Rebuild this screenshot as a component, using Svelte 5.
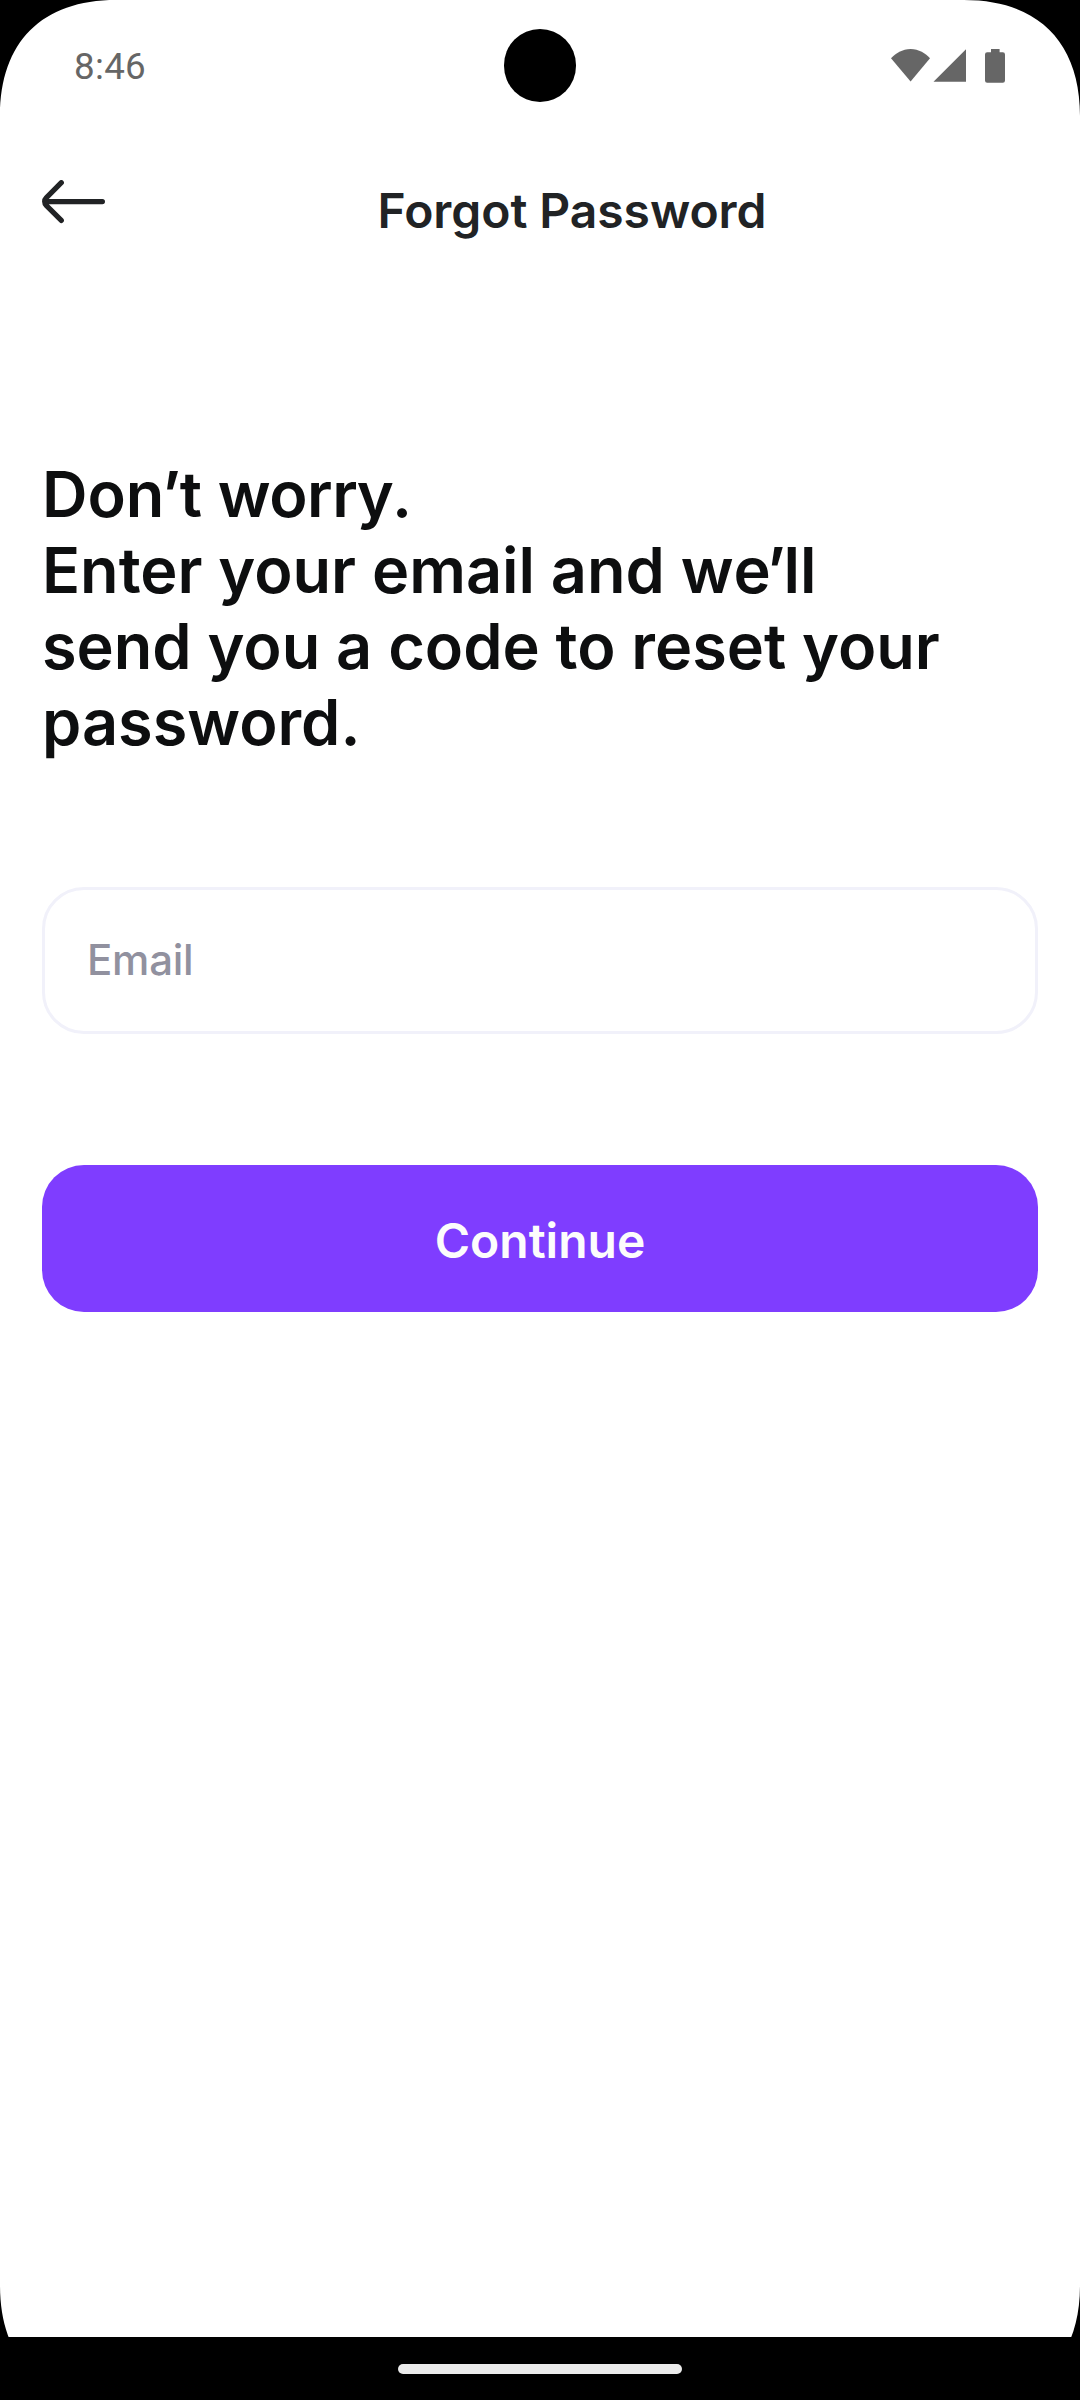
<script lang="ts">
  let email = $state('');
</script>

<div class="device">
  <main class="screen">
    <header class="status">
      <span class="time">8:46</span>
      <svg class="indicators" width="116" height="36" viewBox="890 48 116 36" fill="#666">
        <path d="M910.6 81.6 891 58.2C895.6 53.6 902.4 49 910.6 49S925.600 53.600 930 58.200Z" />
        <path d="M933.500 81.700H966V49.200Z" />
        <path d="M991 49h8.600v3.300h3.200a2.200 2.200 0 0 1 2.200 2.200v26a2.200 2.200 0 0 1-2.200 2.200h-15.600a2.200 2.200 0 0 1-2.200-2.200v-26a2.200 2.200 0 0 1 2.200-2.200h3.800Z" />
      </svg>
    </header>

    <nav class="topbar">
      <button class="back" aria-label="Back">
        <svg width="64" height="44" viewBox="42 180 64 44" fill="none" stroke="#212325" stroke-width="5.2" stroke-linecap="round" stroke-linejoin="round">
          <path d="M61.300 182.700 46.200 197.800a5.300 5.300 0 0 0 0 7.500L61.300 220.400M46 201.600H102.400" />
        </svg>
      </button>
      <h1>Forgot Password</h1>
    </nav>

    <form class="form" onsubmit={(e) => e.preventDefault()}>
      <p class="message">Do<span class="snug">n’</span>t <span class="close">worr</span><span class="tail">y</span>.<br />Enter your email and w<span class="tight">e</span><span class="tail">’</span>ll<br />send you a code to reset your<br />password.</p>
      <input type="email" placeholder="Email" bind:value={email} />
      <button class="continue" type="submit">Continue</button>
    </form>
  </main>

  <footer class="gesture"><span class="pill"></span></footer>

  <span class="camera"></span>
  <svg class="corners" width="1080" height="2400" viewBox="0 0 1080 2400">
    <path d="M0 0H116C42 0 0 42 0 116Z" />
    <path d="M1080 0H964C1038 0 1080 42 1080 116Z" />
    <path d="M0 2400H116C41 2400 0 2359 0 2285Z" />
    <path d="M1080 2400H964C1039 2400 1080 2359 1080 2285Z" />
  </svg>
</div>

<style>
  :global(body) {
    margin: 0;
    background: #000;
  }

  .device {
    position: relative;
    display: flex;
    flex-direction: column;
    width: 1080px;
    height: 2400px;
    overflow: hidden;
    background: #000;
    font-family: Inter, 'Liberation Sans', sans-serif;
  }

  .screen {
    display: flex;
    flex-direction: column;
    flex: 1;
    background: #fff;
  }

  .status {
    box-sizing: border-box;
    display: flex;
    justify-content: space-between;
    align-items: center;
    height: 132px;
    padding: 0 74px;
  }

  .time {
    padding-top: 2px;
    color: #666;
    font: 400 36.75px/44px Roboto, sans-serif;
    letter-spacing: 0.3px;
  }

  .topbar {
    display: grid;
    grid-template-columns: 64px 1fr;
    height: 168px;
    padding: 0 42px;
  }

  .back {
    width: 64px;
    height: 44px;
    margin-top: 48px;
    padding: 0;
    border: 0;
    background: none;
  }

  .back svg {
    display: block;
  }

  h1 {
    margin: 51px 0 0;
    text-align: center;
    color: #212325;
    font-size: 48px;
    font-weight: 600;
    line-height: 56px;
    letter-spacing: -0.06px;
  }

  .form {
    display: flex;
    flex-direction: column;
    margin-top: 156px;
    padding: 0 42px;
  }

  .message {
    margin: 0 0 127px;
    color: #0d0e0f;
    font-size: 63px;
    font-weight: 600;
    line-height: 76px;
    letter-spacing: -0.02px;
    white-space: nowrap;
  }

  .snug {
    letter-spacing: -0.900px;
  }

  .close {
    letter-spacing: -0.500px;
  }

  .tail {
    letter-spacing: -1.700px;
  }

  .tight {
    letter-spacing: -4px;
  }

  input {
    box-sizing: border-box;
    width: 100%;
    height: 147px;
    padding: 0 42px 2px;
    border: 3px solid #f1f1fa;
    border-radius: 42px;
    outline: 0;
    background: transparent;
    color: #0d0e0f;
    font: 500 42px Inter, sans-serif;
    letter-spacing: -0.25px;
  }

  input::placeholder {
    color: #91919f;
    opacity: 1;
  }

  .continue {
    height: 147px;
    margin-top: 131px;
    padding: 3px 0 0;
    border: 0;
    border-radius: 42px;
    background: #7f3dff;
    color: #fcfcfc;
    font: 600 48px Inter, sans-serif;
  }

  .gesture {
    display: flex;
    justify-content: center;
    box-sizing: border-box;
    height: 63px;
    padding-top: 27px;
  }

  .pill {
    width: 284px;
    height: 10px;
    border-radius: 5px;
    background: #ebebeb;
  }

  .camera {
    position: absolute;
    top: 29.200px;
    left: 503.500px;
    width: 72.500px;
    height: 72.500px;
    border-radius: 50%;
    background: #000;
  }

  .corners {
    position: absolute;
    inset: 0;
    pointer-events: none;
  }
</style>
